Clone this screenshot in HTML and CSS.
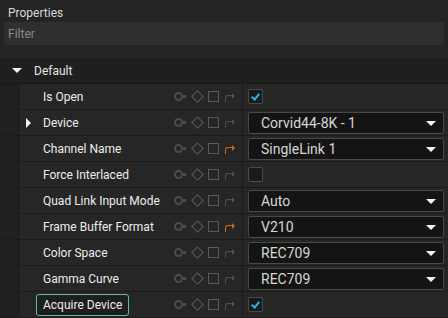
FILE: index.html
```html
<!DOCTYPE html>
<html lang="en">
<head>
    <meta charset="UTF-8">
    <title>Properties</title>
    <link rel="stylesheet" href="styles.css">
</head>
<body>
    <div class="panel">
        <div class="title">Properties</div>
        <div class="filter">Filter</div>

        <div class="header">
            <span class="caret-down"></span>
            <span>Default</span>
        </div>

        <div class="rows">
            <div class="row">
                <div class="gutter"></div>
                <div class="name"><span class="label">Is Open</span>
                    <span class="icons"><i class="ic-key"></i><i class="ic-diamond"></i><i class="ic-square"></i><i class="ic-reset"></i></span></div>
                <div class="value"><span class="check on"></span></div>
            </div>
            <div class="row">
                <div class="gutter"></div>
                <div class="name"><span class="expand"></span><span class="label">Device</span>
                    <span class="icons"><i class="ic-key"></i><i class="ic-diamond"></i><i class="ic-square"></i><i class="ic-reset"></i></span></div>
                <div class="value"><div class="combo">Corvid44-8K - 1</div></div>
            </div>
            <div class="row">
                <div class="gutter"></div>
                <div class="name"><span class="label">Channel Name</span>
                    <span class="icons"><i class="ic-key"></i><i class="ic-diamond"></i><i class="ic-square"></i><i class="ic-reset active"></i></span></div>
                <div class="value"><div class="combo">SingleLink 1</div></div>
            </div>
            <div class="row">
                <div class="gutter"></div>
                <div class="name"><span class="label">Force Interlaced</span>
                    <span class="icons"><i class="ic-key"></i><i class="ic-diamond"></i><i class="ic-square"></i><i class="ic-reset"></i></span></div>
                <div class="value"><span class="check"></span></div>
            </div>
            <div class="row">
                <div class="gutter"></div>
                <div class="name"><span class="label">Quad Link Input Mode</span>
                    <span class="icons"><i class="ic-key"></i><i class="ic-diamond"></i><i class="ic-square"></i><i class="ic-reset"></i></span></div>
                <div class="value"><div class="combo">Auto</div></div>
            </div>
            <div class="row">
                <div class="gutter"></div>
                <div class="name"><span class="label">Frame Buffer Format</span>
                    <span class="icons"><i class="ic-key"></i><i class="ic-diamond"></i><i class="ic-square"></i><i class="ic-reset active"></i></span></div>
                <div class="value"><div class="combo">V210</div></div>
            </div>
            <div class="row">
                <div class="gutter"></div>
                <div class="name"><span class="label">Color Space</span>
                    <span class="icons"><i class="ic-key"></i><i class="ic-diamond"></i><i class="ic-square"></i><i class="ic-reset"></i></span></div>
                <div class="value"><div class="combo">REC709</div></div>
            </div>
            <div class="row">
                <div class="gutter"></div>
                <div class="name"><span class="label">Gamma Curve</span>
                    <span class="icons"><i class="ic-key"></i><i class="ic-diamond"></i><i class="ic-square"></i><i class="ic-reset"></i></span></div>
                <div class="value"><div class="combo">REC709</div></div>
            </div>
            <div class="row">
                <div class="gutter"></div>
                <div class="name"><span class="label focus">Acquire Device</span>
                    <span class="icons"><i class="ic-key"></i><i class="ic-diamond"></i><i class="ic-square"></i><i class="ic-reset"></i></span></div>
                <div class="value"><span class="check on"></span></div>
            </div>
        </div>
    </div>
</body>
</html>
```

FILE: styles.css
```css
body {
    margin: 0;
    background-color: #242424;
    font-family: Roboto, "Open Sans", sans-serif;
    font-size: 12px;
    color: #e6e6e6;
}

.panel {
    width: 448px;
    height: 318px;
    overflow: hidden;
}

.title {
    height: 22px;
    line-height: 26px;
    padding-left: 8px;
    color: #d8d8d8;
}

.filter {
    margin: 0 4px;
    height: 23px;
    line-height: 24px;
    padding-left: 4px;
    background-color: #2f2f2f;
    border-radius: 2px;
    color: #8a8a8a;
}

.header {
    margin-top: 13px;
    height: 25px;
    display: flex;
    align-items: center;
    background-color: #1f1f1f;
    border-bottom: 1px solid #191919;
    position: relative;
}

.header::after {
    content: "";
    position: absolute;
    left: 242px;
    top: 0;
    bottom: 0;
    width: 1px;
    background-color: #1a1a1a;
}

.caret-down {
    width: 0;
    height: 0;
    margin: 0 12px 0 12px;
    border-left: 5px solid transparent;
    border-right: 5px solid transparent;
    border-top: 5px solid #f2f2f2;
}

.row {
    display: flex;
    height: 25px;
    border-bottom: 1px solid #1b1b1b;
}

.gutter {
    width: 18px;
    background-color: #202020;
    border-right: 1px solid #1b1b1b;
}

.name {
    width: 223px;
    display: flex;
    align-items: center;
    background-color: #262626;
    border-right: 1px solid #1b1b1b;
    position: relative;
}

.label {
    padding-left: 24px;
    flex: 1;
    color: #ececec;
    white-space: nowrap;
}

.label.focus {
    flex: none;
    margin-left: 17px;
    padding: 3px 6px;
    border: 1px solid #5fbf8f;
    border-radius: 3px;
    background-color: #1e1e1e;
}

.expand {
    position: absolute;
    left: 7px;
    top: 8px;
    width: 0;
    height: 0;
    border-top: 5px solid transparent;
    border-bottom: 5px solid transparent;
    border-left: 5px solid #f2f2f2;
}

.icons {
    display: flex;
    align-items: center;
    margin-left: auto;
    padding-right: 7px;
}

.icons i {
    display: block;
    box-sizing: border-box;
}

.ic-key {
    width: 9px;
    height: 9px;
    border: 2px solid #4c4c4c;
    border-radius: 50%;
    position: relative;
    margin-right: 10px;
}

.ic-key::after {
    content: "";
    position: absolute;
    right: -5px;
    top: 1px;
    width: 3px;
    height: 3px;
    background-color: #4c4c4c;
}

.ic-diamond {
    width: 9px;
    height: 9px;
    border: 1.5px solid #5e5e5e;
    transform: rotate(45deg);
    margin-right: 6px;
}

.ic-square {
    width: 11px;
    height: 11px;
    border: 1.5px solid #5a5a5a;
    margin-right: 6px;
}

.ic-reset {
    width: 10px;
    height: 8px;
    position: relative;
}

.ic-reset::before {
    content: "";
    position: absolute;
    left: 0;
    top: 2px;
    width: 6px;
    height: 6px;
    border-left: 1.5px solid #5b4a4a;
    border-top: 1.5px solid #5b4a4a;
    border-top-left-radius: 3px;
}

.ic-reset::after {
    content: "";
    position: absolute;
    right: 0;
    top: 0;
    width: 0;
    height: 0;
    border-top: 3.5px solid transparent;
    border-bottom: 3.5px solid transparent;
    border-left: 3.5px solid #5b4a4a;
}

.ic-reset.active::before {
    border-color: #c8691c;
}

.ic-reset.active::after {
    border-left-color: #c8691c;
}

.value {
    flex: 1;
    display: flex;
    align-items: center;
    padding-left: 5px;
    padding-right: 4px;
    background-color: #262626;
}

.check {
    width: 15px;
    height: 15px;
    box-sizing: border-box;
    border: 1px solid #4a4a4a;
    border-radius: 2px;
    background-color: #1a1a1a;
    position: relative;
}

.check.on::after {
    content: "";
    position: absolute;
    left: 4px;
    top: 2px;
    width: 3px;
    height: 6px;
    border-right: 2px solid #3ab0f0;
    border-bottom: 2px solid #3ab0f0;
    transform: rotate(40deg);
}

.combo {
    flex: 1;
    height: 22px;
    box-sizing: border-box;
    border: 1px solid #484848;
    border-radius: 2px;
    background-color: #141414;
    color: #d6d6d6;
    font-size: 14px;
    line-height: 20px;
    padding-left: 12px;
    position: relative;
}

.combo::after {
    content: "";
    position: absolute;
    right: 7px;
    top: 8px;
    width: 0;
    height: 0;
    border-left: 5px solid transparent;
    border-right: 5px solid transparent;
    border-top: 5px solid #f4f4f4;
}
```
